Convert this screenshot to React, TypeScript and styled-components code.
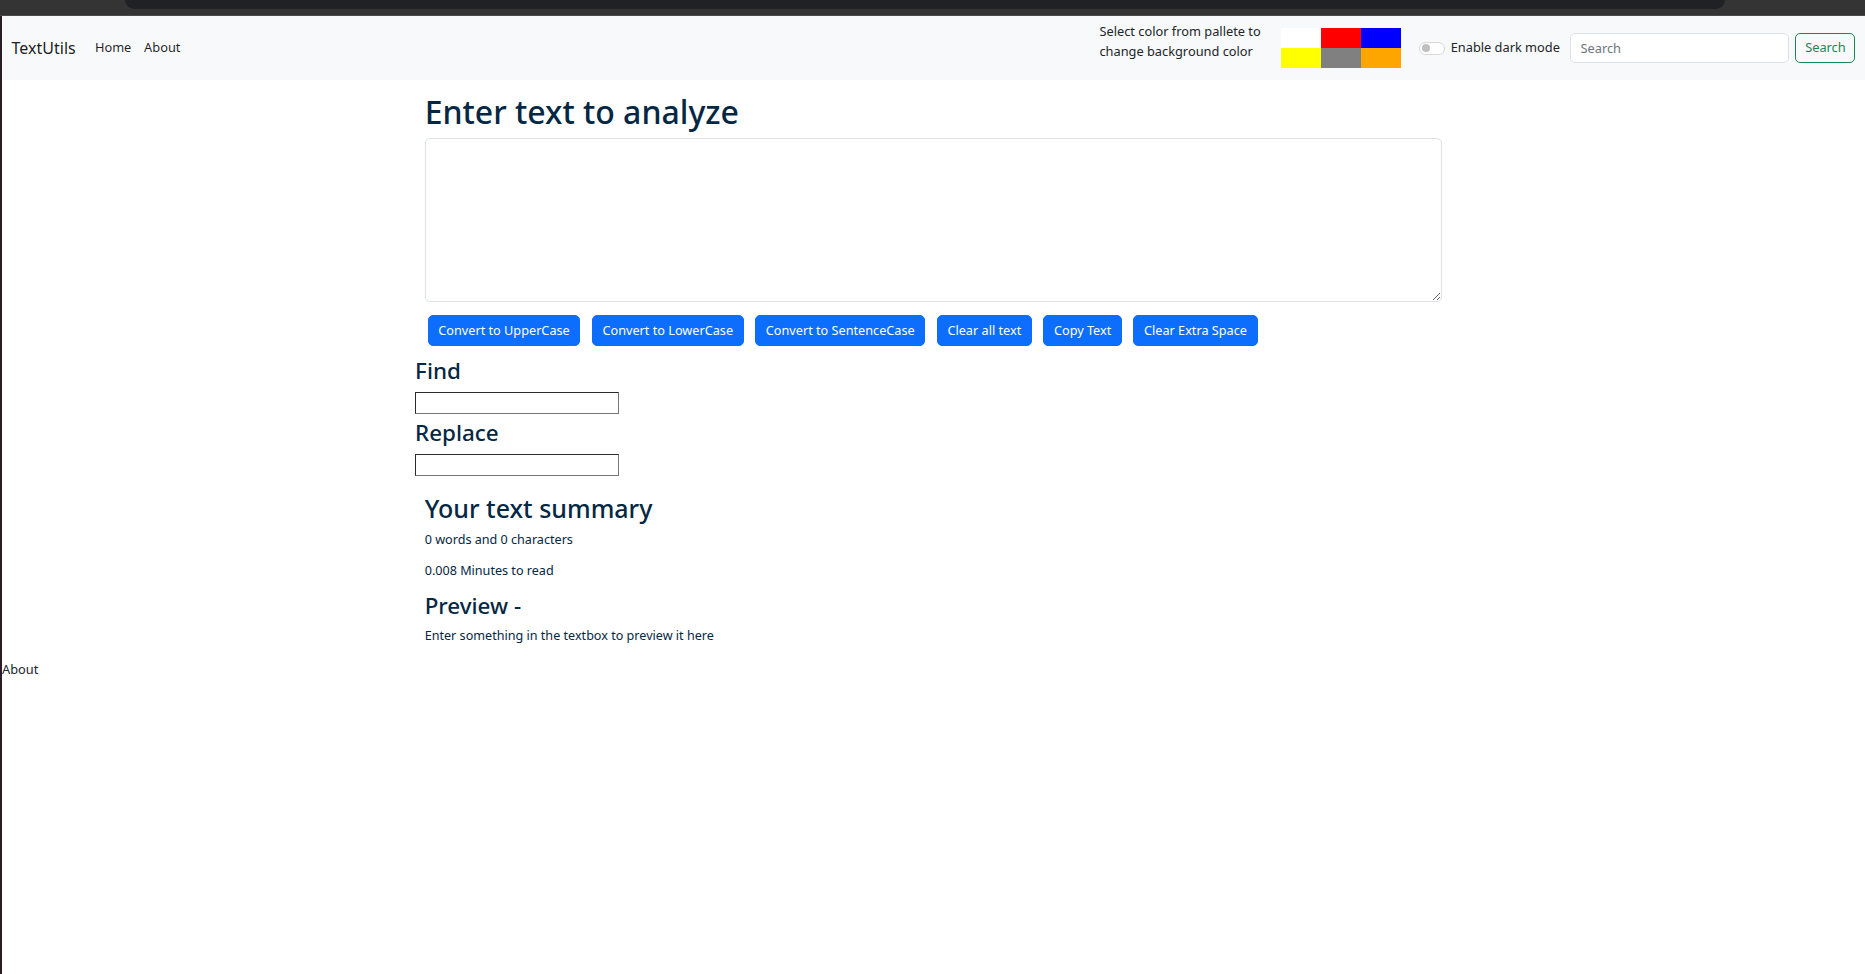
import React from "react";
import styled, { createGlobalStyle } from "styled-components";

const GlobalStyle = createGlobalStyle`
  html, body { margin: 0; padding: 0; background: #ffffff; }
  body {
    font-family: "Noto Sans", "Open Sans", sans-serif;
    font-size: 12.8px;
    line-height: 1.5;
    color: #042743;
  }
  * { box-sizing: border-box; }
`;

const Shell = styled.div`
  display: flex;
  flex-direction: column;
  min-height: 974px;
`;

const ChromeBar = styled.div`
  height: 16px;
  background: #343434;
  border-bottom: 1px solid #4a4a4a;
  display: flex;
  align-items: flex-start;
  padding-left: 125px;
  padding-right: 140px;
`;

const AddressBar = styled.div`
  flex: 1;
  height: 9px;
  background: #202124;
  border-radius: 0 0 12px 12px;
`;

const Body = styled.div`
  display: flex;
  flex: 1;
`;

const LeftEdge = styled.div`
  width: 2px;
  background: #2a1c27;
`;

const Page = styled.div`
  flex: 1;
  display: flex;
  flex-direction: column;
  min-width: 0;
`;

const Navbar = styled.nav`
  height: 64px;
  background: #f8f9fa;
  display: flex;
  align-items: center;
  padding: 0 9.6px;
`;

const Brand = styled.a`
  font-size: 16px;
  color: rgba(0, 0, 0, 0.9);
  margin-right: 12.8px;
  text-decoration: none;
`;

const NavLinks = styled.div`
  display: flex;
`;

const NavLink = styled.a`
  padding: 0 6.4px;
  color: rgba(0, 0, 0, 0.88);
  text-decoration: none;
`;

const NavRight = styled.div`
  margin-left: auto;
  display: flex;
  align-items: center;
`;

const PaletteText = styled.div`
  line-height: 20px;
  color: #212529;
  white-space: nowrap;
  margin-right: 20px;
  margin-bottom: 14px;
`;

const Palette = styled.div`
  display: grid;
  grid-template-columns: repeat(3, 40px);
  grid-template-rows: repeat(2, 20px);
  margin-right: 18px;
`;

const Swatch = styled.div<{ $c: string }>`
  background: ${(p) => p.$c};
`;

const SwitchWrap = styled.label`
  display: flex;
  align-items: center;
  color: #212529;
  margin-right: 10px;
`;

const SwitchTrack = styled.span`
  width: 26px;
  height: 13px;
  border: 1px solid rgba(0, 0, 0, 0.15);
  border-radius: 7px;
  background: #ffffff;
  display: flex;
  align-items: center;
  padding-left: 2px;
  margin-right: 6px;
`;

const SwitchKnob = styled.span`
  width: 8px;
  height: 8px;
  border-radius: 50%;
  background: #bfbfbf;
`;

const SearchForm = styled.form`
  display: flex;
  align-items: center;
  gap: 6.5px;
`;

const SearchInput = styled.input`
  width: 219px;
  height: 30px;
  padding: 0 9.6px;
  font: inherit;
  font-size: 12.8px;
  color: #212529;
  border: 1px solid #dee2e6;
  border-radius: 5px;
  background: #ffffff;
  &::placeholder { color: #6c757d; }
`;

const SearchButton = styled.button`
  height: 30px;
  width: 60px;
  font: inherit;
  font-size: 12.8px;
  color: #198754;
  background: transparent;
  border: 1px solid #198754;
  border-radius: 5px;
`;

const Container = styled.div`
  width: 1056px;
  margin: 0 auto;
  padding: 0 9.6px;
`;

const Inner = styled.div<{ $mt?: number }>`
  padding: 0 9.6px;
  margin-top: ${(p) => p.$mt ?? 0}px;
`;

const H1 = styled.h1`
  font-size: 32px;
  font-weight: 500;
  line-height: 1.2;
  margin: 13px 0 7px;
`;

const H2 = styled.h2`
  font-size: 25px;
  font-weight: 500;
  line-height: 1.2;
  margin: 0 0 8px;
`;

const H3 = styled.h3<{ $mt?: number }>`
  font-size: 22.4px;
  font-weight: 500;
  line-height: 1.2;
  margin: ${(p) => p.$mt ?? 0}px 0 7px;
`;

const TextArea = styled.textarea`
  display: block;
  width: 100%;
  height: 164px;
  border: 1px solid #dee2e6;
  border-radius: 5px;
  background: #ffffff;
  padding: 4.8px 9.6px;
  font: inherit;
  resize: vertical;
  margin-bottom: 13px;
`;

const ButtonRow = styled.div`
  display: flex;
  gap: 11.5px;
  padding-left: 3px;
`;

const Button = styled.button`
  height: 31px;
  padding: 0 9.6px;
  font: inherit;
  font-size: 12.7px;
  color: #ffffff;
  background: #0d6efd;
  border: 1px solid #0d6efd;
  border-radius: 5px;
`;

const FieldInput = styled.input`
  display: block;
  width: 204px;
  height: 22px;
  border-style: solid;
  border-width: 1px;
  border-color: #2b2b2b #767676 #767676 #2b2b2b;
  background: #ffffff;
`;

const Para = styled.p<{ $mb?: number }>`
  margin: 0 0 ${(p) => p.$mb ?? 12.8}px;
  font-size: 12.6px;
`;

const Footer = styled.div`
  color: #212529;
  line-height: 19.2px;
  margin-top: 1px;
`;

const swatches = ["#ffffff", "#ff0000", "#0000ff", "#ffff00", "#808080", "#ffa500"];
const buttons = [
  "Convert to UpperCase",
  "Convert to LowerCase",
  "Convert to SentenceCase",
  "Clear all text",
  "Copy Text",
  "Clear Extra Space",
];

export default function App() {
  return (
    <>
      <GlobalStyle />
      <Shell>
        <ChromeBar>
          <AddressBar />
        </ChromeBar>
        <Body>
          <LeftEdge />
          <Page>
            <Navbar>
              <Brand href="#">TextUtils</Brand>
              <NavLinks>
                <NavLink href="#">Home</NavLink>
                <NavLink href="#">About</NavLink>
              </NavLinks>
              <NavRight>
                <PaletteText>
                  Select color from pallete to
                  <br />
                  change background color
                </PaletteText>
                <Palette>
                  {swatches.map((c) => (
                    <Swatch key={c} $c={c} />
                  ))}
                </Palette>
                <SwitchWrap>
                  <SwitchTrack>
                    <SwitchKnob />
                  </SwitchTrack>
                  Enable dark mode
                </SwitchWrap>
                <SearchForm onSubmit={(e) => e.preventDefault()}>
                  <SearchInput placeholder="Search" />
                  <SearchButton type="button">Search</SearchButton>
                </SearchForm>
              </NavRight>
            </Navbar>
            <Container>
              <Inner>
                <H1>Enter text to analyze</H1>
                <TextArea />
                <ButtonRow>
                  {buttons.map((b) => (
                    <Button key={b}>{b}</Button>
                  ))}
                </ButtonRow>
              </Inner>
              <H3 $mt={12}>Find</H3>
              <FieldInput />
              <H3 $mt={6}>Replace</H3>
              <FieldInput />
              <Inner $mt={17}>
                <H2>Your text summary</H2>
                <Para $mb={11.5}>0 words and 0 characters</Para>
                <Para>0.008 Minutes to read</Para>
                <H3>Preview -</H3>
                <Para>Enter something in the textbox to preview it here</Para>
              </Inner>
            </Container>
            <Footer>About</Footer>
          </Page>
        </Body>
      </Shell>
    </>
  );
}
